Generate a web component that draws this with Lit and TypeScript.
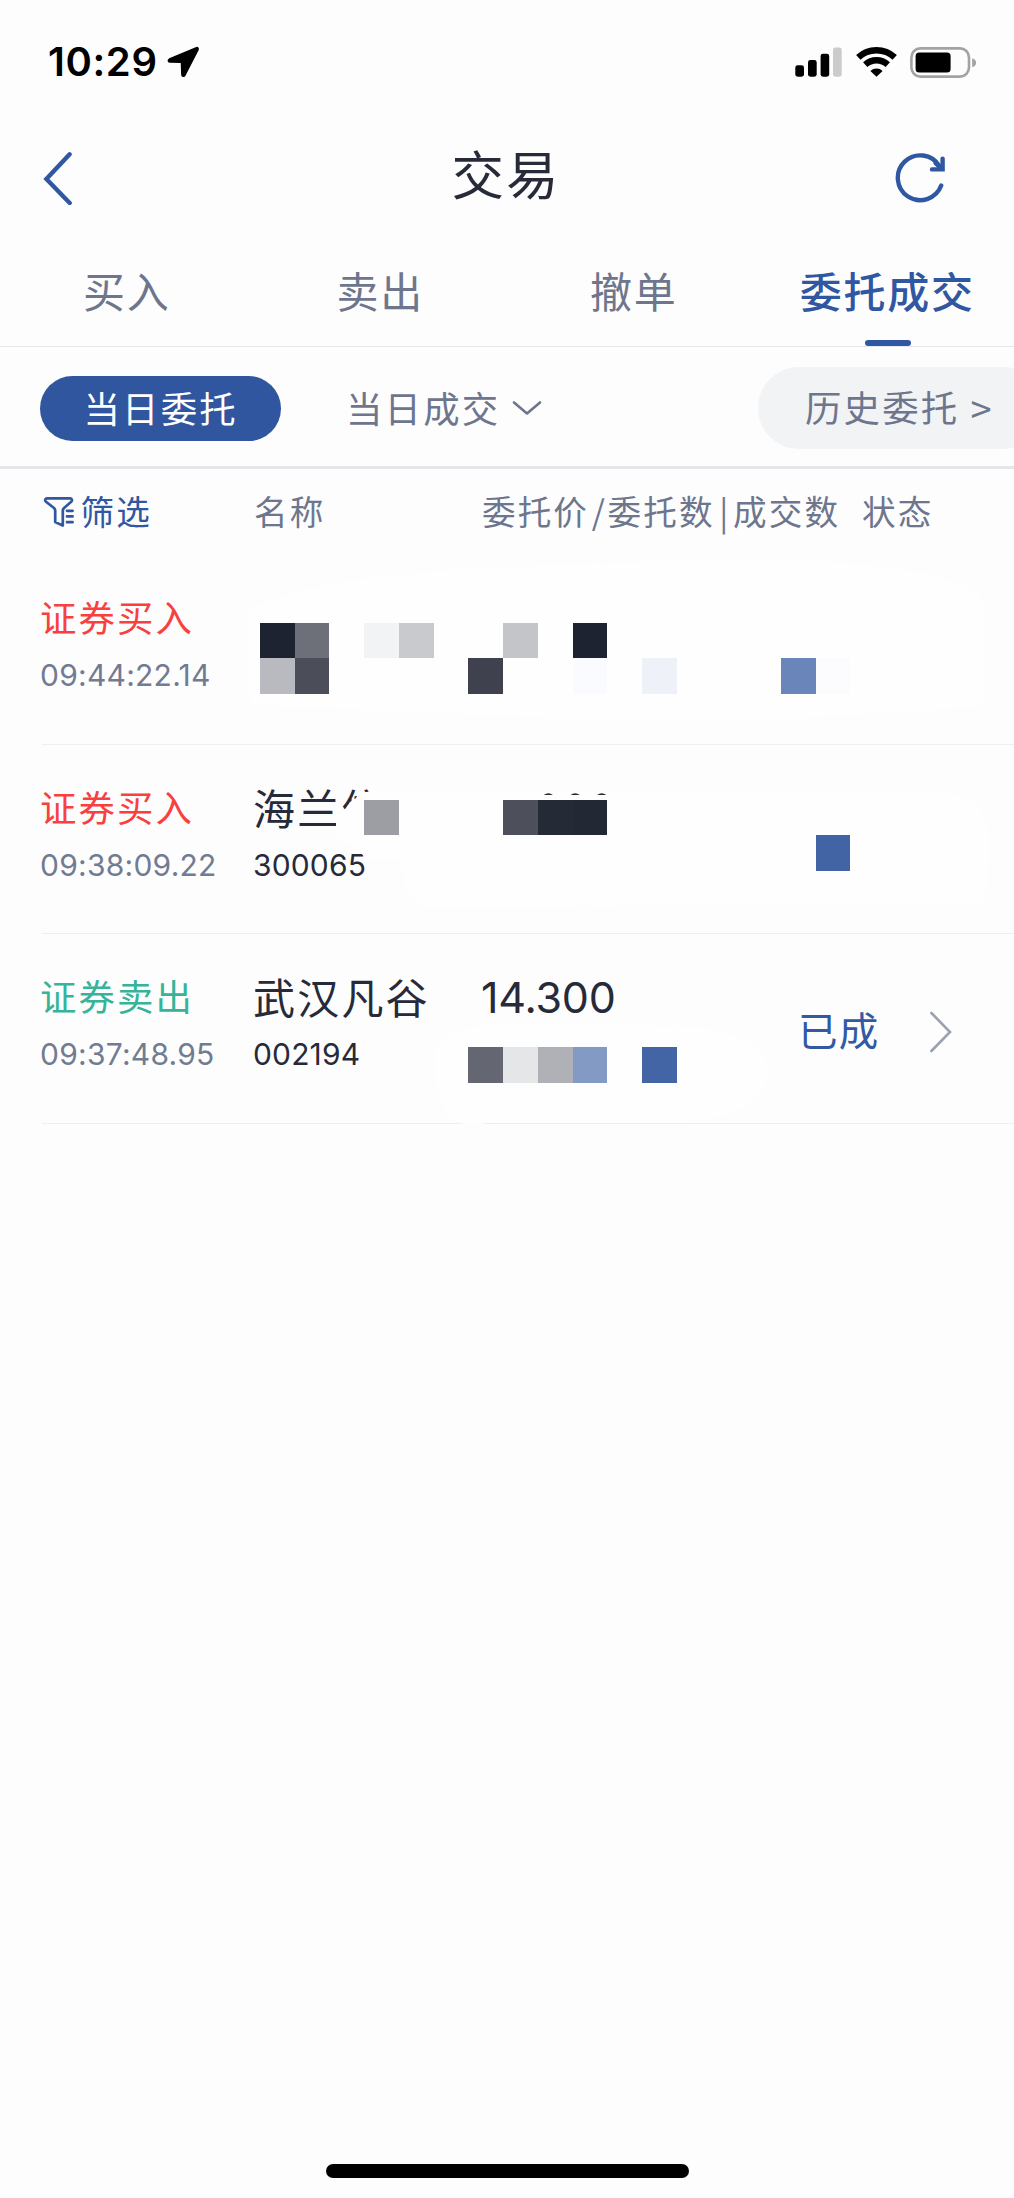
import { LitElement, html, css, svg, nothing } from "lit";
import { customElement, property } from "lit/decorators.js";

interface Cell {
  x: number;
  y: number;
  color: string;
}

interface Order {
  side: "buy" | "sell";
  action: string;
  time: string;
  name?: string;
  code?: string;
  price?: string;
  status?: string;
  /** White shape that hides part of the row. */
  veil: string;
  /** Mosaic cells, in column and row units from the row's mosaic origin. */
  top: number;
  cells: Cell[];
  /** Remains of the digits above the veil, as x centres. */
  crumbs?: number[];
}

const CELL_W = 34.73;
const CELL_H = 35.4;
const CELL_X = 260;

const ORDERS: Order[] = [
  {
    side: "buy",
    action: "证券买入",
    time: "09:44:22.14",
    veil: "M248 55 C330 10 560 10 700 6 C860 0 985 20 985 50 L985 150 C900 160 720 168 620 166 L250 150 Z",
    top: 67.8,
    cells: [
      { x: 0, y: 0, color: "#1e2331" },
      { x: 1, y: 0, color: "#6d7079" },
      { x: 3, y: 0, color: "#f2f3f5" },
      { x: 4, y: 0, color: "#c9cace" },
      { x: 7, y: 0, color: "#c4c5c9" },
      { x: 9, y: 0, color: "#1e2331" },
      { x: 0, y: 1, color: "#b9bac0" },
      { x: 1, y: 1, color: "#4b4e59" },
      { x: 6, y: 1, color: "#3f424e" },
      { x: 9, y: 1, color: "#fafbfe" },
      { x: 11, y: 1, color: "#eef1f7" },
      { x: 15, y: 1, color: "#6a85b9" },
      { x: 16, y: 1, color: "#fcfcfe" },
    ],
  },
  {
    side: "buy",
    action: "证券买入",
    time: "09:38:09.22",
    name: "海兰信",
    code: "300065",
    veil: "M336 70 L343 68 L350 57 L356 53 L359 48 L366 47 L375 46 L930 46 C975 47 990 70 990 100 L985 158 L430 163 C405 158 404 130 400 115 L367 114 L352 100 L336 92 Z",
    top: 55,
    cells: [
      { x: 3, y: 0, color: "#9d9ea3" },
      { x: 7, y: 0, color: "#4d505a" },
      { x: 8, y: 0, color: "#252a37" },
      { x: 9, y: 0, color: "#232835" },
      { x: 16, y: 1, color: "#4264a5" },
    ],
    crumbs: [548.3, 575.2, 601.7],
  },
  {
    side: "sell",
    action: "证券卖出",
    time: "09:37:48.95",
    name: "武汉凡谷",
    code: "002194",
    price: "14.300",
    status: "已成",
    veil: "M434 120 C438 96 470 91 520 90 L700 93 C750 100 768 120 768 140 C766 165 735 185 690 187 L492 187 C480 192 464 192 456 187 C440 178 434 150 434 120 Z",
    top: 113.4,
    cells: [
      { x: 6, y: 0, color: "#646671" },
      { x: 7, y: 0, color: "#e5e6e8" },
      { x: 8, y: 0, color: "#b0b1b6" },
      { x: 9, y: 0, color: "#839ac5" },
      { x: 11, y: 0, color: "#4365a6" },
    ],
  },
];

@customElement("status-bar")
class StatusBar extends LitElement {
  static styles = css`
    :host {
      display: flex;
      align-items: center;
      height: 124px;
      padding: 0 37px 0 48px;
    }
    .clock {
      font: 600 40px/48px Inter, "Liberation Sans", sans-serif;
      letter-spacing: 0.6px;
      color: #000;
    }
    .arrow {
      margin-left: 9px;
    }
    .icons {
      display: flex;
      align-items: center;
      gap: 13.5px;
      margin-left: auto;
    }
    svg {
      display: block;
    }
  `;

  render() {
    return html`
      <span class="clock">10:29</span>
      <svg class="arrow" width="33" height="32" viewBox="0 0 33 32">
        <path
          d="M29 2 L2.5 13.2 C1 14 1.2 15.8 2.8 15.9 L14.6 16 L15 28.5 C15 30.4 17 30.6 17.8 29.2 L30.8 3.8 C31.5 2.2 30.6 1.3 29 2Z"
          stroke="#000"
          stroke-width="1.8"
          stroke-linejoin="round"
        />
      </svg>
      <div class="icons">
        <svg width="47" height="30" viewBox="0 0 47 30">
          <rect x="0.3" y="18.3" width="8.7" height="11.4" rx="2.4" />
          <rect x="13" y="13" width="8.7" height="16.7" rx="2.4" />
          <rect x="25.6" y="6.7" width="8.6" height="23" rx="2.4" />
          <rect x="38" y="0.4" width="8.7" height="29.3" rx="2.4" fill="#cbcbcb" />
        </svg>
        <svg width="41" height="30" viewBox="0 0 41 30">
          <g fill="none" stroke="#000" stroke-width="6.4">
            <path d="M2.3 10.4 C12.5 0.9 28.5 0.9 38.7 10.4" />
            <path d="M9.2 17.6 C15.6 11.8 25.4 11.8 31.8 17.6" />
          </g>
          <path d="M20.5 29.8 L14.4 23.9 C17.8 20.6 23.2 20.6 26.6 23.9Z" />
        </svg>
        <svg width="67" height="31" viewBox="0 0 67 31">
          <rect x="1.4" y="1.4" width="57.6" height="28.2" rx="9" fill="none" stroke="#a3a3a3" stroke-width="2.6" />
          <rect x="5.6" y="5.6" width="35" height="20" rx="3.6" />
          <path d="M62.2 11.2 C67.4 12.6 67.4 18.8 62.2 20.2Z" fill="#a3a3a3" />
        </svg>
      </div>
    `;
  }
}

@customElement("nav-bar")
class NavBar extends LitElement {
  @property() heading = "";

  static styles = css`
    :host {
      display: flex;
      align-items: center;
      justify-content: space-between;
      height: 108px;
      padding: 0 67px 0 43px;
    }
    .title {
      font: 400 52.5px/60px "Noto Sans CJK SC", sans-serif;
      letter-spacing: 2px;
      color: #262a39;
      padding: 0 0 12px 44px;
    }
    svg {
      display: block;
      fill: none;
      stroke: #2f57a2;
      stroke-width: 4.4;
      stroke-linecap: round;
    }
  `;

  render() {
    return html`
      <svg width="30" height="54" viewBox="0 0 30 54">
        <path d="M26.6 3.3 L3.4 28 L26.7 52" />
      </svg>
      <span class="title">${this.heading}</span>
      <svg width="52" height="52" viewBox="0 0 52 52">
        <path d="M46.2 33.6 A22.4 22.4 0 1 1 44.4 14.2" />
        <path d="M47.6 6.6 V17.4 H37" stroke-linejoin="miter" />
        <path d="M40.6 11.2 L46.8 17" />
      </svg>
    `;
  }
}

@customElement("order-row")
class OrderRow extends LitElement {
  @property({ attribute: false }) order!: Order;

  static styles = css`
    :host {
      display: block;
      position: relative;
      box-sizing: border-box;
      height: 189.6px;
    }
    .row {
      display: grid;
      grid-template-columns: 213px 228px 317px 1fr;
      box-sizing: border-box;
      height: 100%;
      margin-left: 42px;
      padding-top: 35px;
      border-bottom: 1.5px solid #eceef2;
    }
    .cell {
      display: flex;
      flex-direction: column;
      white-space: nowrap;
    }
    .kind,
    .name {
      font: 400 36.4px/52px "Noto Sans CJK SC", sans-serif;
      letter-spacing: 2.1px;
      height: 65px;
    }
    .kind {
      margin-left: -2px;
    }
    .buy {
      color: #f9403e;
    }
    .sell {
      color: #36b398;
    }
    .name {
      font-size: 42px;
      line-height: 54px;
      letter-spacing: 2.2px;
      color: #262a39;
      margin-left: -2px;
    }
    .time,
    .code,
    .price {
      font: 400 30px/40px Inter, "Liberation Sans", sans-serif;
      color: #717b92;
      letter-spacing: 0.25px;
    }
    .time {
      margin-left: -2px;
    }
    .code {
      color: #262a39;
      letter-spacing: 0.15px;
      margin-left: -2px;
    }
    .price {
      font-size: 43px;
      line-height: 57px;
      color: #262a39;
      letter-spacing: -0.2px;
      margin-left: -2px;
    }
    .state {
      display: flex;
      align-items: center;
      height: 120px;
      gap: 50px;
      margin-left: -2px;
      font: 400 39.5px/56px "Noto Sans CJK SC", sans-serif;
      letter-spacing: 1.2px;
      color: #3159a4;
    }
    .more {
      fill: none;
      stroke: #9aa1b0;
      stroke-width: 2.6;
      stroke-linecap: round;
      margin-top: 5px;
    }
    .mosaic {
      position: absolute;
      left: 0;
      top: 0;
    }
  `;

  render() {
    const o = this.order;
    return html`
      <div class="row">
        <div class="cell">
          <span class="kind ${o.side}">${o.action}</span>
          <span class="time">${o.time}</span>
        </div>
        <div class="cell">
          ${o.name ? html`<span class="name">${o.name}</span>` : nothing}
          ${o.code ? html`<span class="code">${o.code}</span>` : nothing}
        </div>
        <div class="cell">
          ${o.price ? html`<span class="price">${o.price}</span>` : nothing}
        </div>
        ${o.status
          ? html`<div class="state">
              <span>${o.status}</span>
              <svg class="more" width="24" height="42" viewBox="0 0 24 42">
                <path d="M2.4 2 L21 21 L2.4 40" />
              </svg>
            </div>`
          : nothing}
      </div>
      <svg class="mosaic" width="1014" height="190" viewBox="0 0 1014 190">
        <path d=${o.veil} fill="#fefefe" />
        ${o.cells.map(
          (c) => svg`<rect
            x=${CELL_X + c.x * CELL_W}
            y=${o.top + c.y * CELL_H}
            width=${CELL_W}
            height=${CELL_H}
            fill=${c.color}
            shape-rendering="crispEdges"
          />`,
        )}
        ${(o.crumbs ?? []).map(
          (x) => svg`<path d="M${x - 4.6} 50 Q${x} 46.5 ${x + 4.6} 50Z" fill="#262a39" />`,
        )}
      </svg>
    `;
  }
}

@customElement("app-root")
class AppRoot extends LitElement {
  static styles = css`
    :host {
      display: flex;
      flex-direction: column;
      box-sizing: border-box;
      width: 1014px;
      height: 2198px;
      overflow: hidden;
      background: #fdfdfd;
      font-family: "Noto Sans CJK SC", sans-serif;
      color: #6d768d;
    }
    .tabs {
      display: grid;
      grid-template-columns: repeat(4, 1fr);
      height: 114px;
      border-bottom: 1px solid #e6e8ec;
    }
    .tab {
      display: flex;
      flex-direction: column;
      align-items: center;
      justify-content: flex-end;
      font-size: 42px;
      line-height: 60px;
      letter-spacing: 1.8px;
      white-space: nowrap;
    }
    .tab::after {
      content: "";
      width: 46px;
      height: 6px;
      margin: 20px 0 0 1px;
      border-radius: 3px;
    }
    .tab.on {
      color: #2f57a2;
      font-weight: 500;
    }
    .tab.on::after {
      background: #2f57a2;
    }
    .filters {
      display: flex;
      align-items: center;
      height: 119px;
      box-sizing: border-box;
      padding: 3px 0 0 40px;
      font-size: 36.4px;
      letter-spacing: 2.2px;
      line-height: 54px;
      white-space: nowrap;
    }
    .pill {
      width: 241px;
      height: 65px;
      box-sizing: border-box;
      padding: 4px 0 0 43.5px;
      border-radius: 33px;
      background: #2f569f;
      color: #fff;
    }
    .done {
      margin-left: 65px;
      padding-bottom: 3px;
    }
    .caret {
      margin-left: 12px;
      fill: none;
      stroke: #6d768d;
      stroke-width: 2.6;
      stroke-linecap: round;
      stroke-linejoin: round;
    }
    .history {
      flex: none;
      width: 286px;
      height: 82px;
      box-sizing: border-box;
      margin-left: auto;
      margin-right: -30px;
      padding: 12px 0 0 47px;
      border-radius: 41px;
      background: #f2f3f5;
    }
    .gt {
      display: inline-block;
      font: 400 38px/40px "Noto Sans CJK SC", sans-serif;
      margin-left: 11px;
      transform: translateY(2px);
    }
    .head {
      display: grid;
      grid-template-columns: 211px 228px 380px 1fr;
      align-items: center;
      box-sizing: border-box;
      height: 89px;
      padding: 0 0 3px 43px;
      border-top: 3px solid #e5e6ea;
      font-size: 33.6px;
      line-height: 48px;
      letter-spacing: 2.1px;
      white-space: nowrap;
    }
    .sift {
      display: flex;
      align-items: center;
      gap: 5.5px;
      color: #2f57a2;
    }
    .funnel {
      fill: none;
      stroke: #2f57a2;
      stroke-width: 2.7;
      stroke-linejoin: round;
      stroke-linecap: round;
      margin-top: 2px;
    }
    .sep {
      display: inline-block;
      width: 18.5px;
      letter-spacing: 0;
      text-align: center;
    }
    .home {
      width: 363px;
      height: 14px;
      margin: auto auto 20.5px 326px;
      border-radius: 7px;
      background: #000;
    }
  `;

  render() {
    return html`
      <status-bar></status-bar>
      <nav-bar heading="交易"></nav-bar>
      <div class="tabs">
        <span class="tab">买入</span>
        <span class="tab">卖出</span>
        <span class="tab">撤单</span>
        <span class="tab on">委托成交</span>
      </div>
      <div class="filters">
        <span class="pill">当日委托</span>
        <span class="done">当日成交</span>
        <svg class="caret" width="30" height="16" viewBox="0 0 30 16">
          <path d="M2 2.4 L15 13.4 L28 2.4" />
        </svg>
        <span class="history">历史委托<span class="gt">&gt;</span></span>
      </div>
      <div class="head">
        <span class="sift">
          <svg class="funnel" width="32" height="32" viewBox="0 0 32 32">
            <path d="M4.2 2.4 H27 C29 2.4 29.6 4.4 28.2 5.8 L20.8 12.2 C20 13 19.8 13.6 19.8 14.6 V29.6 L12.2 26 V14.6 C12.2 13.4 11.8 12.8 11 12 L3 5.8 C1.4 4.4 2.2 2.4 4.2 2.4Z" />
            <path d="M24 14.8 H29.6 M24 20.4 H29.6 M24 26.2 H29.6" />
          </svg>
          筛选
        </span>
        <span>名称</span>
        <span>委托价<span class="sep">/</span>委托数<span class="sep">|</span>成交数</span>
        <span>状态</span>
      </div>
      ${ORDERS.map((o) => html`<order-row .order=${o}></order-row>`)}
      <div class="home"></div>
    `;
  }
}
